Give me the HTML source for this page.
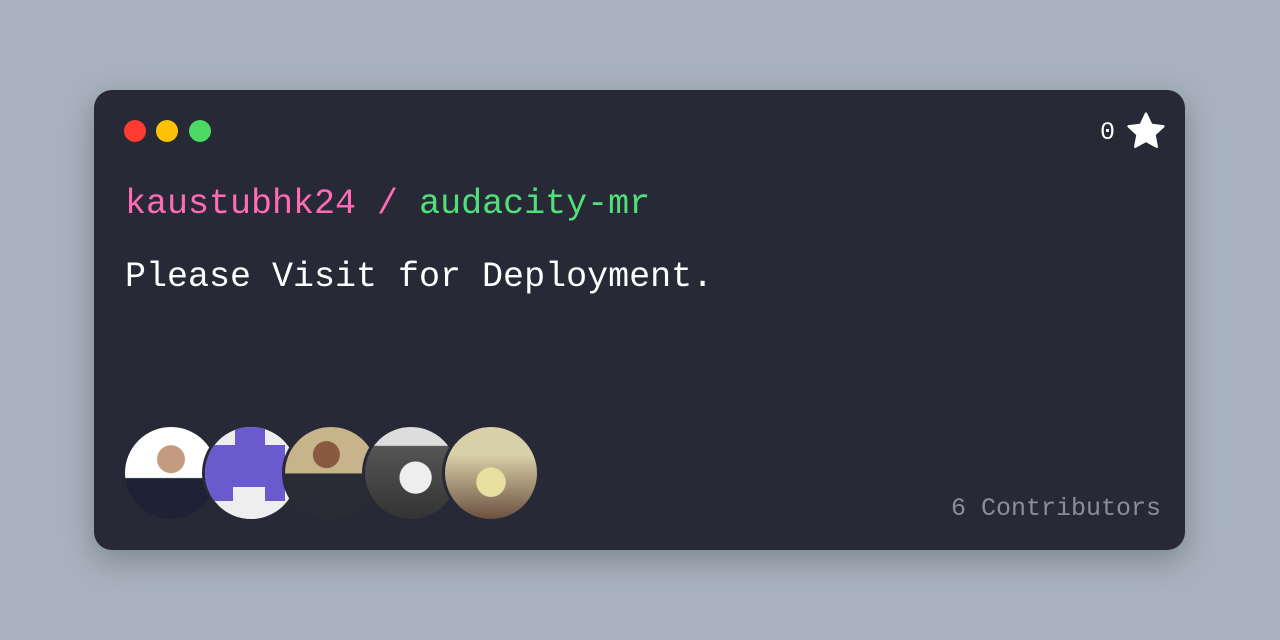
<!DOCTYPE html><html><head><style>
body{margin:0;width:1280px;height:640px;background:#a7b2be;font-family:"Liberation Mono",monospace;position:relative;overflow:hidden}
.card{position:absolute;left:94px;top:90px;width:1091px;height:460px;background:#272936;border-radius:18px;box-shadow:0 10px 30px rgba(0,0,0,.25)}
.dot{position:absolute;top:30px;width:22px;height:22px;border-radius:50%}
.t{position:absolute;white-space:pre}
.av{position:absolute;top:334px;width:92px;height:92px;border-radius:50%;border:3px solid #272936;overflow:hidden}
</style></head><body><div class="card">
<div class="dot" style="left:30px;background:#ff3b30"></div>
<div class="dot" style="left:62px;background:#ffc107"></div>
<div class="dot" style="left:95px;background:#4cd964"></div>
<div class="t" style="right:70px;top:28px;font-size:25px;color:#fff">0</div>
<svg style="position:absolute;left:1032px;top:22px" width="40" height="38" viewBox="0 0 24 23"><path d="M12 1l3.2 6.8 7.3.9-5.4 5 1.4 7.3L12 17.4 5.5 21l1.4-7.3-5.4-5 7.3-.9z" fill="#fff" stroke="#fff" stroke-width="1.5" stroke-linejoin="round"/></svg>
<div class="t" style="left:31px;top:94px;font-size:35px;color:#ff6bb5">kaustubhk24 / <span style="color:#50e07a">audacity-mr</span></div>
<div class="t" style="left:31px;top:167px;font-size:35px;color:#fff">Please Visit for Deployment.</div>
<div class="av" style="left:28px;background:radial-gradient(circle at 50% 35%,#c49a80 0 18%,transparent 19%),linear-gradient(to bottom,#fff 55%,#1d2235 56%)"></div>
<div class="av" style="left:108px;background:#eee"><div style="position:absolute;left:0;top:18px;width:80px;height:56px;background:#6a5acd"></div><div style="position:absolute;left:30px;top:0;width:30px;height:18px;background:#6a5acd"></div><div style="position:absolute;left:28px;top:60px;width:32px;height:40px;background:#eee"></div></div>
<div class="av" style="left:188px;background:radial-gradient(circle at 45% 30%,#8a5a40 0 16%,transparent 17%),linear-gradient(to bottom,#c8b48a 50%,#2a2c35 51%)"></div>
<div class="av" style="left:268px;background:radial-gradient(circle at 55% 55%,#eee 0 22%,transparent 23%),linear-gradient(#ddd 20%,#555 21%,#333)"></div>
<div class="av" style="left:348px;background:radial-gradient(circle at 50% 60%,#e8e0a0 0 20%,transparent 21%),linear-gradient(#d8d0a8 30%,#6b5040)"></div>
<div class="t" style="right:24px;top:404px;font-size:25px;color:#8b8e99">6 Contributors</div>
</div></body></html>
